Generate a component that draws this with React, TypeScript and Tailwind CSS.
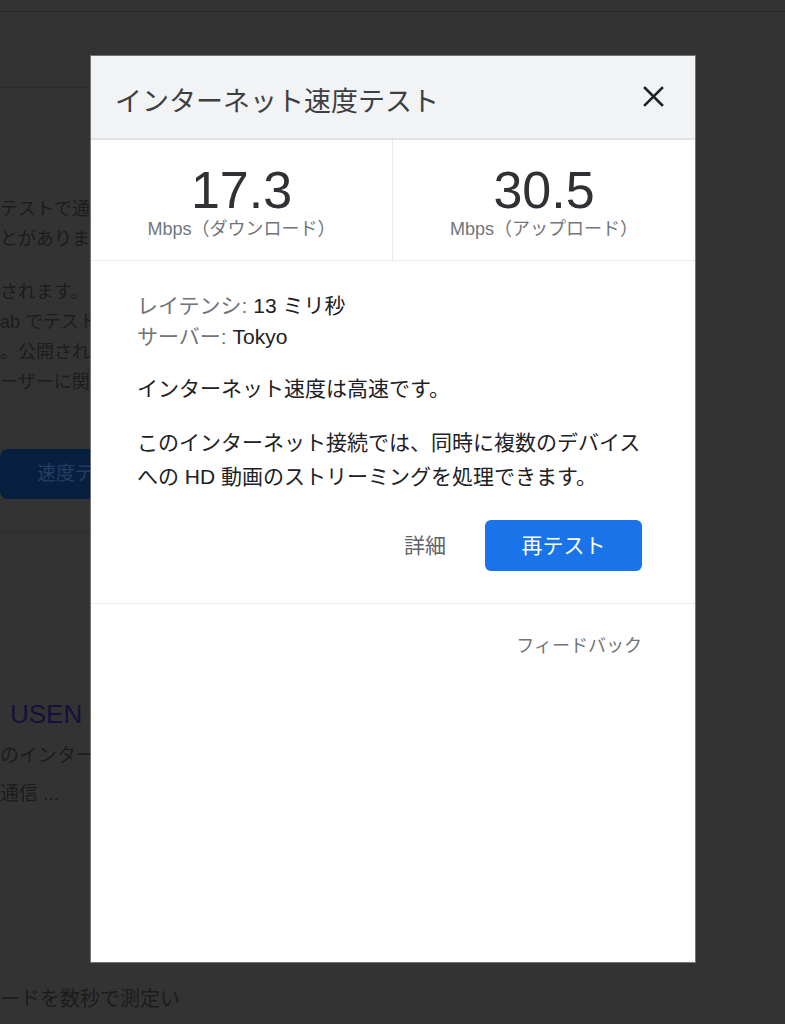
const jp = '"Liberation Sans", "Noto Sans CJK JP", sans-serif';

function Background() {
  return (
    <div className="flex flex-col text-[#1c1c1c]" style={{ fontFamily: jp }}>
      <div className="h-[12px] border-b border-[#2a2a2a]" />
      <div className="h-[76px] w-[91px] border-b border-[#2c2c2c]" />
      <div className="mt-[106px] text-[18px] leading-[30px] whitespace-nowrap">
        <p>テストで通常よりも</p>
        <p>とがあります</p>
      </div>
      <div className="mt-[23px] text-[18px] leading-[30px] whitespace-nowrap">
        <p>されます。</p>
        <p>ab でテストが</p>
        <p>。公開されて</p>
        <p>ーザーに関す</p>
      </div>
      <div className="mt-[52px] h-[50px] w-[200px] rounded-lg bg-[#08203f] pl-[37px] text-[19px] leading-[50px] text-[#263c62]">
        速度テスト
      </div>
      <div className="mt-[33px] w-[91px] border-b border-[#2c2c2c]" />
      <p className="mt-[163px] pl-[10px] text-[26px] leading-[36px] text-[#13123a] whitespace-nowrap">USEN GATE</p>
      <div className="mt-[5px] text-[19px] leading-[38px] whitespace-nowrap">
        <p>のインターネット</p>
        <p>通信 ...</p>
      </div>
      <p className="mt-[171px] text-[20px] leading-[30px] whitespace-nowrap">ードを数秒で測定い</p>
    </div>
  );
}

function CloseIcon() {
  return (
    <svg width="21" height="21" viewBox="0 0 21 21" className="block">
      <path d="M2 2 L19 19 M19 2 L2 19" stroke="#202124" strokeWidth="2.6" strokeLinecap="square" />
    </svg>
  );
}

function Stat({ value, label, border }: { value: string; label: string; border?: boolean }) {
  return (
    <div className={`flex flex-col items-center pt-[24px] ${border ? 'border-r border-[#e8eaed]' : ''}`}>
      <span className="text-[52px] leading-[52px] text-[#303134]">{value}</span>
      <span className="mt-[2px] text-[18px] leading-[22px] text-[#70757a]">{label}</span>
    </div>
  );
}

export default function App() {
  return (
    <div className="relative h-[1024px] w-full overflow-hidden bg-[#333333]">
      <Background />

      {/* speed test dialog */}
      <div
        className="absolute left-[91px] top-[56px] flex h-[906px] w-[604px] flex-col bg-white shadow-[0_0_0_1px_rgba(160,160,160,0.6)]"
        style={{ fontFamily: jp }}
      >
        <div className="flex h-[84px] items-center justify-between border-b-2 border-[#e0e2e5] bg-[#f1f3f4] pl-[24px] pr-[31px]">
          <h1 className="mt-[10px] text-[27px] leading-[32px] text-[#3c4043]">インターネット速度テスト</h1>
          <button className="-mt-[2px]">
            <CloseIcon />
          </button>
        </div>

        <div className="grid h-[121px] grid-cols-2 border-b border-[#e8eaed]">
          <Stat value="17.3" label="Mbps（ダウンロード）" border />
          <Stat value="30.5" label="Mbps（アップロード）" />
        </div>

        <div className="flex flex-col pl-[46px] pr-[52px] pt-[29px] text-[21px] text-[#202124]">
          <div className="leading-[31px]">
            <p>
              <span className="text-[#70757a]">レイテンシ:</span> 13 ミリ秒
            </p>
            <p>
              <span className="text-[#70757a]">サーバー:</span> Tokyo
            </p>
          </div>
          <p className="mt-[20px] leading-[34px]">インターネット速度は高速です。</p>
          <p className="mt-[20px] leading-[34px]">
            このインターネット接続では、同時に複数のデバイスへの HD 動画のストリーミングを処理できます。
          </p>
          <div className="mt-[26px] flex items-center justify-end gap-[39px] pr-[1px]">
            <button className="text-[21px] leading-[30px] text-[#5f6368]">詳細</button>
            <button className="h-[51px] w-[157px] rounded-[6px] bg-[#1a73e8] text-[21px] text-white">再テスト</button>
          </div>
        </div>

        <div className="mt-[32px] border-b border-[#e8eaed]" />

        <div className="flex justify-end pr-[53px] pt-[30px]">
          <span className="text-[18px] leading-[24px] text-[#70757a]">フィードバック</span>
        </div>
      </div>
    </div>
  );
}
